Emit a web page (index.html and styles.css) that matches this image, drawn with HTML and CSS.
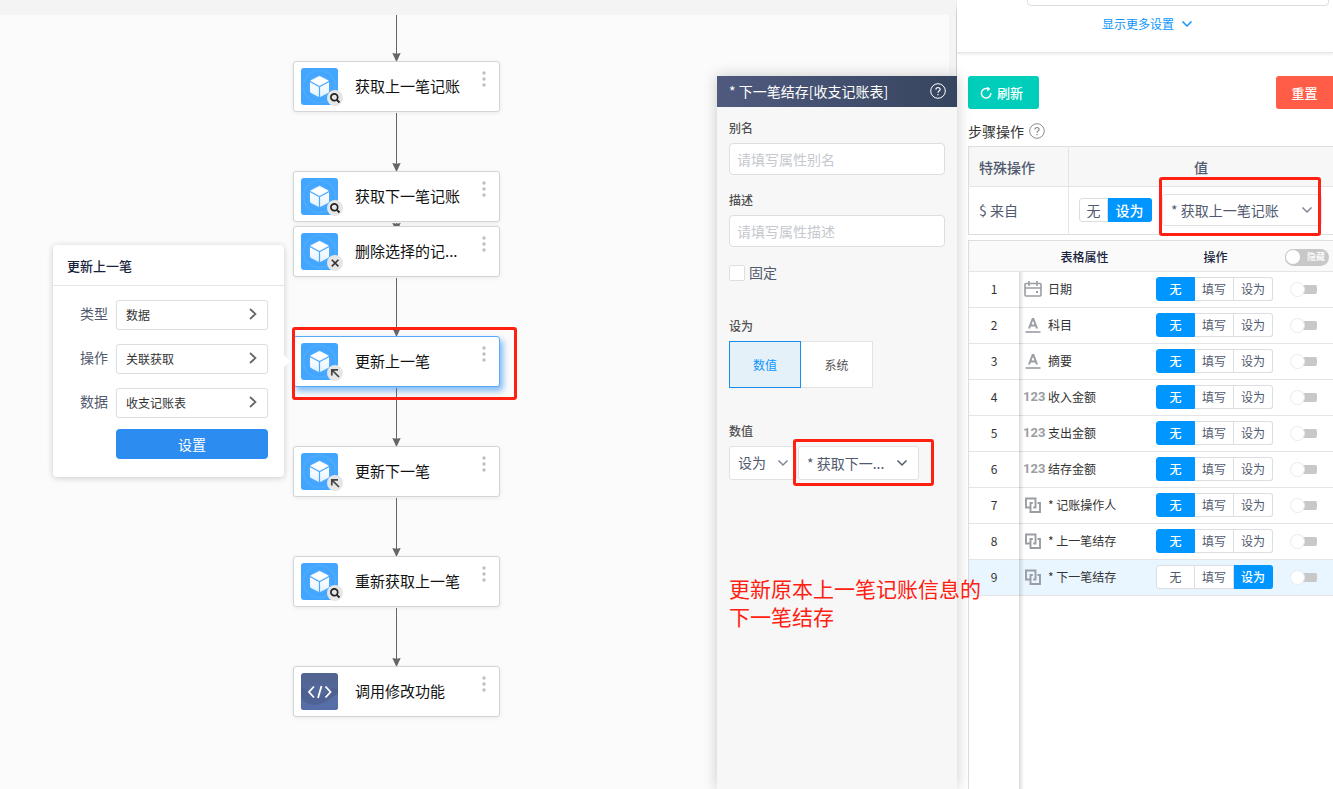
FILE: index.html
```html
<!DOCTYPE html>
<html lang="zh-CN">
<head>
<meta charset="utf-8">
<meta name="viewport" content="width=device-width, initial-scale=1">
<title>更新上一笔</title>
<link rel="stylesheet" href="styles.css">
</head>
<body>
<svg class="sprite" aria-hidden="true">
  <defs>
    <linearGradient id="face" x1="0" y1="0" x2="0" y2="1"><stop offset="0" stop-color="#fff"/><stop offset="1" stop-color="#e2f2ff"/></linearGradient>
    <linearGradient id="navy" x1="0" y1="0" x2="0" y2="1"><stop offset="0" stop-color="#50638f"/><stop offset="1" stop-color="#566ca6"/></linearGradient>
  </defs>
  <symbol id="cube" viewBox="0 0 37 37">
    <rect width="37" height="37" rx="3" fill="#42a5fe"/>
    <circle cx="18.500" cy="18.500" r="16" fill="none" stroke="#4dabff" stroke-width="2"/>
    <circle cx="18.500" cy="18.500" r="12" fill="#49a8ff"/>
    <path d="M18.500 8.300 27.300 12.800 18.500 17.600 9.700 12.800Z" fill="#fff" stroke="#fff" stroke-linejoin="round" stroke-width=".8"/>
    <path d="M9 14.200 17.900 19V28.900L10 24.900Q9 24.300 9 23.300ZM28 14.200 19.100 19V28.900L27 24.900Q28 24.300 28 23.300Z" fill="url(#face)"/>
  </symbol>
  <symbol id="code" viewBox="0 0 37 37">
    <rect width="37" height="37" rx="3" fill="url(#navy)"/>
    <path d="M0 13C8 17 13 25 21 22S31 12 37 15V34Q37 37 34 37H3Q0 37 0 34Z" fill="#465985" opacity=".45"/>
    <path d="M0 26C12 37 23 31 37 20V34Q37 37 34 37H3Q0 37 0 34Z" fill="#5d74b2" opacity=".6"/>
    <path d="M13 13.500 8 19 13 24.500M24.500 13.500 29.500 19 24.500 24.500M20.500 13 17 25" fill="none" stroke="#fff" stroke-width="1.800"/>
  </symbol>
  <symbol id="b-search" viewBox="0 0 16 16"><circle cx="8" cy="8" r="8" fill="#e6e6e6"/><circle cx="7.300" cy="7.300" r="3.400" fill="none" stroke="#222" stroke-width="1.700"/><path d="m9.800 9.800 2.700 2.700" stroke="#222" stroke-width="1.900"/></symbol>
  <symbol id="b-close" viewBox="0 0 16 16"><circle cx="8" cy="8" r="8" fill="#e6e6e6"/><path d="m4.800 4.800 6.600 6.600m0-6.600-6.600 6.600" stroke="#333" stroke-width="1.600"/></symbol>
  <symbol id="b-arrow" viewBox="0 0 16 16"><circle cx="8" cy="8" r="8" fill="#e6e6e6"/><path d="M4.800 10.500V4.800H11M5 5l7 7" fill="none" stroke="#444" stroke-width="1.700"/></symbol>
  <symbol id="dots" viewBox="0 0 4 16"><g fill="#bfbfbf"><circle cx="2" cy="2" r="1.700"/><circle cx="2" cy="8" r="1.700"/><circle cx="2" cy="14" r="1.700"/></g></symbol>
  <symbol id="tip" viewBox="0 0 9 8"><path d="M.3 0 4.500 .8 8.700 0 5 8H4Z" fill="#666"/></symbol>
  <symbol id="right" viewBox="0 0 8 12"><path d="m1 1 5.500 5L1 11" fill="none" stroke="#666" stroke-width="1.700"/></symbol>
  <symbol id="down" viewBox="0 0 12 8"><path d="m1.500 1.500 4.500 4.500 4.500-4.500" fill="none" stroke="currentColor" stroke-width="1.500"/></symbol>
  <symbol id="help" viewBox="0 0 16 16"><circle cx="8" cy="8" r="7.300" fill="none" stroke="currentColor"/><path d="M5.900 6.600C5.900 3.800 10.100 3.900 10.100 6.400 10.100 7.900 8 7.900 8 9.700M8 11v1.300" fill="none" stroke="currentColor" stroke-width="1.200"/></symbol>
  <symbol id="cal" viewBox="0 0 18 18"><path d="M2 3.500H16Q17 3.500 17 4.500V15Q17 16 16 16H2Q1 16 1 15V4.500Q1 3.500 2 3.500ZM1 8H17M5 1V6M13 1V6" fill="none" stroke="#9a9da3" stroke-width="1.600"/><path d="M12 11h2v2h-2z" fill="#9a9da3"/></symbol>
  <symbol id="txt" viewBox="0 0 18 18"><path d="M5 12.500 8.600 3H9.400L13 12.500M6.400 9.500H11.600" fill="none" stroke="#9a9da3" stroke-width="2"/><path d="M1.500 16H16.500" stroke="#9a9da3" stroke-width="1.600"/></symbol>
  <symbol id="rel" viewBox="0 0 18 18"><path d="M6 11.500H2V2.500H11.500V11.500H9.200M8.800 7H6.500V16H16V7H13.500" fill="none" stroke="#9a9da3" stroke-width="1.900"/></symbol>
</svg>

<div class="app">
  <main class="canvas">
    <div class="flow">
      <div class="link first"><svg><use href="#tip"/></svg></div>
      <div class="node"><span class="icon"><svg class="pic"><use href="#cube"/></svg><svg class="badge"><use href="#b-search"/></svg></span><span class="name">获取上一笔记账</span><svg class="dots"><use href="#dots"/></svg></div>
      <div class="link"><svg><use href="#tip"/></svg></div>
      <div class="node"><span class="icon"><svg class="pic"><use href="#cube"/></svg><svg class="badge"><use href="#b-search"/></svg></span><span class="name">获取下一笔记账</span><svg class="dots"><use href="#dots"/></svg></div>
      <div class="link short"><svg><use href="#tip"/></svg></div>
      <div class="node"><span class="icon"><svg class="pic"><use href="#cube"/></svg><svg class="badge"><use href="#b-close"/></svg></span><span class="name">删除选择的记...</span><svg class="dots"><use href="#dots"/></svg></div>
      <div class="link"><svg><use href="#tip"/></svg></div>
      <div class="node active"><span class="icon"><svg class="pic"><use href="#cube"/></svg><svg class="badge"><use href="#b-arrow"/></svg></span><span class="name">更新上一笔</span><svg class="dots"><use href="#dots"/></svg></div>
      <div class="link"><svg><use href="#tip"/></svg></div>
      <div class="node"><span class="icon"><svg class="pic"><use href="#cube"/></svg><svg class="badge"><use href="#b-arrow"/></svg></span><span class="name">更新下一笔</span><svg class="dots"><use href="#dots"/></svg></div>
      <div class="link"><svg><use href="#tip"/></svg></div>
      <div class="node"><span class="icon"><svg class="pic"><use href="#cube"/></svg><svg class="badge"><use href="#b-search"/></svg></span><span class="name">重新获取上一笔</span><svg class="dots"><use href="#dots"/></svg></div>
      <div class="link"><svg><use href="#tip"/></svg></div>
      <div class="node"><span class="icon"><svg class="pic"><use href="#code"/></svg></span><span class="name">调用修改功能</span><svg class="dots"><use href="#dots"/></svg></div>
    </div>

    <section class="popup">
      <h2 class="popup-title">更新上一笔</h2>
      <div class="popup-body">
        <div class="popup-row"><span id="l-type">类型</span><button class="pick" aria-labelledby="l-type v-type"><span id="v-type">数据</span><svg><use href="#right"/></svg></button></div>
        <div class="popup-row"><span id="l-op">操作</span><button class="pick" aria-labelledby="l-op v-op"><span id="v-op">关联获取</span><svg><use href="#right"/></svg></button></div>
        <div class="popup-row"><span id="l-data">数据</span><button class="pick" aria-labelledby="l-data v-data"><span id="v-data">收支记账表</span><svg><use href="#right"/></svg></button></div>
        <button class="primary">设置</button>
      </div>
    </section>

    <section class="panel">
      <header class="panel-head"><h2>* 下一笔结存[收支记账表]</h2><svg><use href="#help"/></svg></header>
      <div class="panel-body">
        <label class="caption" for="alias">别名</label>
        <input class="text" id="alias" type="text" placeholder="请填写属性别名">
        <label class="caption second" for="desc">描述</label>
        <input class="text" id="desc" type="text" placeholder="请填写属性描述">
        <label class="check"><input type="checkbox"><span>固定</span></label>
        <p class="caption">设为</p>
        <div class="tabs"><button class="tab on">数值</button><button class="tab">系统</button></div>
        <p class="caption">数值</p>
        <div class="pair">
          <div class="select small"><select aria-label="数值方式"><option>设为</option></select><svg><use href="#down"/></svg></div>
          <div class="select wide"><select aria-label="数值来源"><option>* 获取下一...</option></select><svg><use href="#down"/></svg></div>
        </div>
      </div>
    </section>
    <div class="mark mark-node"></div>
    <div class="mark mark-value"></div>
    <p class="note">更新原本上一笔记账信息的<br>下一笔结存</p>
  </main>

  <aside class="side">
    <div class="more">
      <input class="text cut" type="text" aria-label="设置">
      <a class="more-link" href="#">显示更多设置<svg><use href="#down"/></svg></a>
    </div>
    <div class="steps">
      <div class="bar">
        <button class="btn refresh"><svg viewBox="0 0 12 12"><path d="M10.800 6A4.700 4.700 0 1 1 6 1.600H8.500" fill="none" stroke="currentColor" stroke-width="1.500"/><path d="M7 -.5 10.400 2 7.200 4.500Z" fill="currentColor"/></svg>刷新</button>
        <button class="btn reset">重置</button>
      </div>
      <h3 class="steps-title">步骤操作<svg><use href="#help"/></svg></h3>
      <table class="special">
        <thead><tr><th class="left">特殊操作</th><th>值</th></tr></thead>
        <tbody><tr><td class="left">$ 来自</td><td><div class="value"><div class="seg two"><button>无</button><button class="on">设为</button></div><div class="select source"><select aria-label="来自"><option>* 获取上一笔记账</option></select><svg><use href="#down"/></svg></div></div></td></tr></tbody>
      </table>
      <div class="grid">
        <table class="props">
          <colgroup><col class="c-num"><col class="c-name"><col class="c-op"><col></colgroup>
          <thead><tr><th></th><th>表格属性</th><th>操作</th><th><label class="hide"><input type="checkbox"><span>隐藏</span></label></th></tr></thead>
          <tbody>
            <tr><td class="num">1</td><td><div class="prop"><svg><use href="#cal"/></svg>日期</div></td><td><div class="seg"><button class="on">无</button><button>填写</button><button>设为</button></div></td><td><input class="toggle" type="checkbox" aria-label="隐藏日期"></td></tr>
            <tr><td class="num">2</td><td><div class="prop"><svg><use href="#txt"/></svg>科目</div></td><td><div class="seg"><button class="on">无</button><button>填写</button><button>设为</button></div></td><td><input class="toggle" type="checkbox" aria-label="隐藏科目"></td></tr>
            <tr><td class="num">3</td><td><div class="prop"><svg><use href="#txt"/></svg>摘要</div></td><td><div class="seg"><button class="on">无</button><button>填写</button><button>设为</button></div></td><td><input class="toggle" type="checkbox" aria-label="隐藏摘要"></td></tr>
            <tr><td class="num">4</td><td><div class="prop"><b>123</b>收入金额</div></td><td><div class="seg"><button class="on">无</button><button>填写</button><button>设为</button></div></td><td><input class="toggle" type="checkbox" aria-label="隐藏收入金额"></td></tr>
            <tr><td class="num">5</td><td><div class="prop"><b>123</b>支出金额</div></td><td><div class="seg"><button class="on">无</button><button>填写</button><button>设为</button></div></td><td><input class="toggle" type="checkbox" aria-label="隐藏支出金额"></td></tr>
            <tr><td class="num">6</td><td><div class="prop"><b>123</b>结存金额</div></td><td><div class="seg"><button class="on">无</button><button>填写</button><button>设为</button></div></td><td><input class="toggle" type="checkbox" aria-label="隐藏结存金额"></td></tr>
            <tr><td class="num">7</td><td><div class="prop"><svg><use href="#rel"/></svg>* 记账操作人</div></td><td><div class="seg"><button class="on">无</button><button>填写</button><button>设为</button></div></td><td><input class="toggle" type="checkbox" aria-label="隐藏记账操作人"></td></tr>
            <tr><td class="num">8</td><td><div class="prop"><svg><use href="#rel"/></svg>* 上一笔结存</div></td><td><div class="seg"><button class="on">无</button><button>填写</button><button>设为</button></div></td><td><input class="toggle" type="checkbox" aria-label="隐藏上一笔结存"></td></tr>
            <tr class="current"><td class="num">9</td><td><div class="prop"><svg><use href="#rel"/></svg>* 下一笔结存</div></td><td><div class="seg"><button>无</button><button>填写</button><button class="on">设为</button></div></td><td><input class="toggle" type="checkbox" aria-label="隐藏下一笔结存"></td></tr>
          </tbody>
        </table>
        <div class="rest"></div>
      </div>
    </div>
    <div class="mark mark-source"></div>
  </aside>
</div>
</body>
</html>
```

FILE: styles.css
```css
* { box-sizing: border-box; }
body { margin: 0; font: 14px/20px "Noto Sans CJK SC", sans-serif; color: #515a6e; overflow: hidden; }
h2, h3, p { margin: 0; }
button, input, select { font: inherit; color: inherit; margin: 0; }
button { padding: 0; cursor: pointer; }
.sprite { position: absolute; width: 0; height: 0; }
.app { display: flex; min-height: 100vh; }

/* flow canvas */
.canvas { position: relative; flex: 1; min-width: 0; background: linear-gradient(#f4f4f4, #f4f4f4) right / 7px 100% no-repeat #fbfbfb; border-top: 15px solid #f4f4f4; border-right: 1px solid #cfcfcf; z-index: 1; }
.flow { display: flex; flex-direction: column; width: 207px; margin-left: 293px; }
.link { display: flex; justify-content: center; align-items: flex-end; height: 59px; padding-top: 1px; background: linear-gradient(#666, #666) 103px 1px / 1px 100% no-repeat; }
.link svg { width: 9px; height: 8px; flex: none; }
.link.first { height: 46px; background-position: 103px 0; }
.link.short { height: 4px; align-items: flex-start; overflow: hidden; }
.node { display: flex; align-items: center; height: 51px; padding: 0 8px 0 7px; background: #fff; border: 1px solid #d3d4d8; border-radius: 3px; box-shadow: 0 1px 4px rgba(0, 0, 0, .08); color: #111; font-size: 15px; }
.node.active { border-color: #57a9f3; box-shadow: 3px 4px 6px rgba(45, 140, 240, .6); }
.icon { position: relative; display: block; width: 37px; height: 37px; margin-right: 17px; }
.pic { display: block; width: 37px; height: 37px; }
.badge { position: absolute; right: -5px; bottom: -1px; width: 16px; height: 16px; }
.name { flex: 1; padding-bottom: 2px; }
.dots { width: 4px; height: 16px; margin: 0 5px 16px 0; }

/* step popup */
.popup { position: absolute; left: 53px; top: 230px; width: 231px; background: #fff; border-radius: 4px; box-shadow: 0 1px 6px rgba(0, 0, 0, .2); }
.popup::after { content: ""; position: absolute; left: 100%; top: 110px; border: 6px solid transparent; border-left-color: #fff; border-right: 0; }
.popup-title { padding: 11px 14px 9px; border-bottom: 1px solid #e3e5e8; font-size: 13px; line-height: 20px; font-weight: 500; color: #17233d; }
.popup-body { display: flex; flex-direction: column; gap: 14px; padding: 14px 16px 18px 27px; }
.popup-row { display: flex; justify-content: space-between; align-items: center; }
.popup-row > span { padding-bottom: 4px; }
.pick { display: flex; justify-content: space-between; align-items: center; width: 152px; height: 30px; padding: 0 10px 0 9px; background: #fff; border: 1px solid #dcdee2; border-radius: 3px; font-size: 12px; color: #333; }
.pick svg { width: 8px; height: 12px; margin-bottom: 2px; }
.primary { align-self: flex-end; width: 152px; height: 30px; margin-top: -3px; background: #2d8cf0; color: #fff; border: 0; border-radius: 4px; }

/* property panel */
.panel { position: absolute; right: -1px; top: 61px; bottom: 0; width: 240px; background: #f7f7f7; box-shadow: 0 0 14px rgba(0, 0, 0, .2); }
.panel-head { display: flex; align-items: center; justify-content: space-between; height: 31px; padding: 0 11px 2px 12px; background: linear-gradient(90deg, #505a7f, #36455f); color: #fff; }
.panel-head h2 { font-size: 14px; line-height: 20px; font-weight: 400; }
.panel-head svg { width: 16px; height: 16px; }
.panel-body { padding: 12px; }
.caption { display: block; margin-bottom: 6px; font-size: 12px; line-height: 18px; font-weight: 500; color: #515151; }
.caption.second { margin-top: 16px; }
.text { display: block; width: 100%; height: 32px; padding: 0 7px; background: #fff; border: 1px solid #dcdee2; border-radius: 4px; }
.text::placeholder { color: #c5c8ce; opacity: 1; }
.check { display: flex; align-items: center; gap: 4px; height: 16px; margin: 18px 0 36px; }
.check span { padding-bottom: 2px; }
.check input { appearance: none; width: 16px; height: 16px; background: #fff; border: 1px solid #dcdee2; border-radius: 2px; }
.tabs { display: flex; margin-bottom: 34px; }
.tab { width: 72px; height: 47px; background: #fff; border: 1px solid #e3e3e3; border-left: 0; font-size: 12px; color: #515151; }
.tab.on { border: 1px solid #188de9; background: #e5f1f9; color: #0c96fc; }
.pair { display: flex; gap: 1px; }
.select { position: relative; display: flex; align-items: center; background: #fff; border: 1px solid #e0e2e6; border-radius: 3px; }
.select select { appearance: none; width: 100%; height: 100%; padding: 0 24px 0 8px; border: 0; background: none; }
.select svg { position: absolute; right: 8px; width: 12px; height: 8px; pointer-events: none; color: #808695; }
.small { width: 68px; height: 34px; }
.small select { padding-bottom: 2px; }
.small svg { right: 7px; }
.wide { width: 121px; height: 34px; }
.wide svg { right: 10px; color: #515a6e; }
.source { width: 160px; height: 32px; }

/* settings sidebar */
.side { position: relative; display: flex; flex-direction: column; width: 376px; background: #fff; }
.more { display: flex; flex-direction: column; align-items: flex-end; height: 53px; overflow: hidden; border-bottom: 1px solid #e8e8e8; box-shadow: 0 1px 3px rgba(0, 0, 0, .1); padding-right: 4px; flex: none; }
.cut { width: 302px; flex: none; margin-top: -26px; }
.more-link { display: flex; align-items: center; gap: 7px; align-self: center; margin: 8px 0 0 9px; color: #0c96fc; font-size: 12px; text-decoration: none; }
.more-link svg { width: 12px; height: 8px; }
.steps { flex: 1; display: flex; flex-direction: column; padding: 23px 0 0 11px; }
.bar { display: flex; justify-content: space-between; }
.btn { display: flex; align-items: center; justify-content: center; gap: 5px; height: 33px; border: 0; border-radius: 3px; color: #fff; font-size: 13px; font-weight: 500; }
.btn svg { width: 12px; height: 12px; }
.refresh { width: 71px; padding-right: 4px; background: #00cdba; }
.reset { width: 57px; background: #ff5d48; border-radius: 3px 0 0 3px; }
.steps-title { display: flex; align-items: center; gap: 5px; margin: 12px 0 5px; font-size: 14px; line-height: 20px; font-weight: 400; color: #333; }
.steps-title svg { width: 16px; height: 16px; color: #8c8c8c; }
table { width: 100%; border-collapse: collapse; table-layout: fixed; }
th, td { padding: 0; font-weight: 500; text-align: center; }
td { font-weight: 400; }
.special { border: 1px solid #dcdee2; border-right: 0; }
.special th { height: 40px; background: #f7f7f7; border-bottom: 1px solid #e3e5e8; }
.special td { height: 48px; padding-bottom: 2px; }
.special .left { width: 100px; padding-left: 10px; text-align: left; border-right: 1px solid #e3e5e8; }
.value { display: flex; align-items: center; gap: 10px; padding-left: 10px; }
.seg { display: flex; }
.seg button { width: 39px; height: 24px; background: #fff; border: 1px solid #dcdee2; border-left-width: 0; font-size: 12px; line-height: 20px; }
.seg button:first-child { border-left-width: 1px; border-radius: 3px 0 0 3px; }
.seg button:last-child { border-radius: 0 3px 3px 0; }
.seg .on { background: #0096ff; border-color: #0096ff; color: #fff; font-weight: 500; }
.seg.two button { width: 44px; font-size: 14px; }
.seg.two button:first-child { width: 29px; }
.grid { display: flex; flex-direction: column; flex: 1; margin-top: 5px; border: 1px solid #dcdee2; border-right: 0; border-bottom: 0; }
.c-num { width: 50px; }
.c-name { width: 131px; }
.c-op { width: 131px; }
.props { font-size: 12px; color: #333; border-collapse: separate; border-spacing: 0; }
.props th { height: 31px; padding-top: 2px; background: #fafafa; color: #17233d; }
.props th, .props td { border-bottom: 1px solid #e3e5e8; }
.props td { height: 36px; }
.props td:not(:last-child) { padding-bottom: 2px; }
.props .seg { padding-left: 6px; color: #515a6e; }
.num, .rest { position: relative; }
.num::after, .rest::after { content: ""; position: absolute; left: 100%; top: 0; bottom: -1px; width: 5px; background: linear-gradient(90deg, rgba(0, 0, 0, .14), rgba(0, 0, 0, 0)); }
.prop { display: flex; align-items: center; gap: 6px; padding-left: 5px; }
.prop svg { width: 18px; height: 18px; }
.prop b { width: 22px; margin: 0 -3px 0 -1px; font: 700 13px/18px Roboto, sans-serif; color: #9a9da3; }
.current td { background: #e9f6ff; }
.rest { flex: 1; width: 50px; }
.toggle { appearance: none; display: flex; align-items: center; width: 27px; height: 13px; margin-left: 9px; background: linear-gradient(#c8c8c8, #c8c8c8) right / 20px 9px no-repeat; border-radius: 7px 5px 5px 7px; }
.toggle::before { content: ""; width: 13px; height: 13px; background: #fff; border: 1px solid #e0edf8; border-radius: 50%; }
.hide { display: flex; align-items: center; gap: 6px; width: 44px; height: 17px; margin-left: 4px; background: #c8c8c8; border-radius: 9px; color: #fff; }
.hide input { appearance: none; width: 16px; height: 16px; background: #fff; border: 1px solid #c8c8c8; border-radius: 50%; }
.hide span { font-size: 9px; line-height: 16px; }

/* annotations over the page */
.mark { position: absolute; border: 3px solid #ff2012; border-radius: 3px; pointer-events: none; }
.mark-node { left: 292px; top: 312px; width: 225px; height: 73px; }
.mark-value { right: 22px; top: 424px; width: 141px; height: 47px; }
.mark-source { right: 12px; top: 177px; width: 162px; height: 59px; }
.note { position: absolute; right: -25px; top: 559px; width: 252px; color: #ff2012; font-size: 21px; line-height: 28px; white-space: nowrap; }
```
